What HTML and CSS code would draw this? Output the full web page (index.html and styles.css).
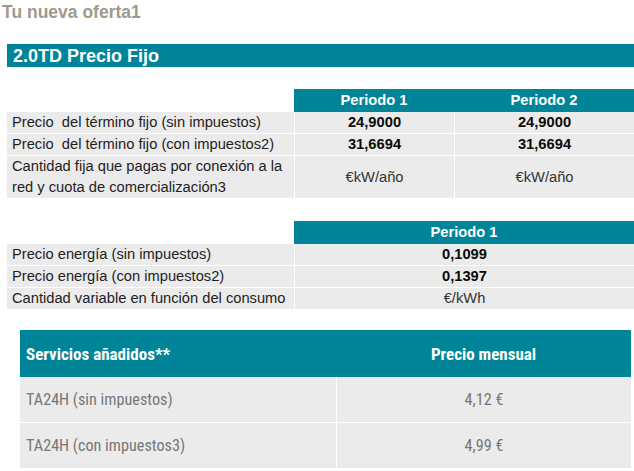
FILE: index.html
```html
<!DOCTYPE html>
<html lang="es">
<head>
<meta charset="utf-8">
<title>Tu nueva oferta</title>
<link rel="stylesheet" href="styles.css">
</head>
<body>
<h1 class="title">Tu nueva oferta1</h1>
<h2 class="banner">2.0TD Precio Fijo</h2>

<table class="grid grid-fixed">
  <colgroup><col class="c-label"><col class="c-p1"><col class="c-p2"></colgroup>
  <thead>
    <tr><th class="blank"></th><th>Periodo 1</th><th>Periodo 2</th></tr>
  </thead>
  <tbody>
    <tr><td>Precio&nbsp; del término fijo (sin impuestos)</td><td class="num">24,9000</td><td class="num">24,9000</td></tr>
    <tr><td>Precio&nbsp; del término fijo (con impuestos2)</td><td class="num">31,6694</td><td class="num">31,6694</td></tr>
    <tr class="tall"><td>Cantidad fija que pagas por conexión a la red y cuota de comercialización3</td><td class="unit">€kW/año</td><td class="unit">€kW/año</td></tr>
  </tbody>
</table>

<table class="grid grid-energy">
  <colgroup><col class="c-label"><col class="c-p1w"></colgroup>
  <thead>
    <tr><th class="blank"></th><th>Periodo 1</th></tr>
  </thead>
  <tbody>
    <tr><td>Precio energía (sin impuestos)</td><td class="num">0,1099</td></tr>
    <tr><td>Precio energía (con impuestos2)</td><td class="num">0,1397</td></tr>
    <tr><td>Cantidad variable en función del consumo</td><td class="unit">€/kWh</td></tr>
  </tbody>
</table>

<table class="services">
  <colgroup><col class="s-label"><col class="s-price"></colgroup>
  <thead>
    <tr><th class="s-name">Servicios añadidos**</th><th>Precio mensual</th></tr>
  </thead>
  <tbody>
    <tr><td class="s-name">TA24H (sin impuestos)</td><td>4,12 €</td></tr>
    <tr><td class="s-name">TA24H (con impuestos3)</td><td>4,99 €</td></tr>
  </tbody>
</table>
</body>
</html>
```
FILE: styles.css
```css
html, body {
  margin: 0;
  padding: 0;
  background: #ffffff;
}

body {
  width: 634px;
  font-family: "Liberation Sans", Arial, sans-serif;
  color: #1e1e1e;
  overflow: hidden;
}

.title {
  margin: 0;
  padding: 2px 0 0 2px;
  font-size: 17.5px;
  line-height: 20px;
  font-weight: bold;
  color: #a0998c;
}

.banner {
  margin: 22px 0 0 7px;
  height: 23px;
  padding: 0 0 0 6px;
  background: #008598;
  color: #ffffff;
  font-size: 18px;
  line-height: 24px;
  font-weight: bold;
}

.grid {
  margin-left: 7px;
  width: 627px;
  border-collapse: separate;
  border-spacing: 0;
  table-layout: fixed;
  font-size: 14.7px;
}

.grid-fixed { margin-top: 22px; }
.grid-energy { margin-top: 23px; }

.c-label { width: 287px; }
.c-p1 { width: 160px; }
.c-p2 { width: 180px; }
.c-p1w { width: 340px; }

.grid th {
  height: 23px;
  padding: 0;
  background: #008598;
  color: #ffffff;
  font-weight: bold;
  text-align: center;
  line-height: 23px;
}

.grid th.blank {
  background: #ffffff;
  border-right: 1px solid #ffffff;
}

.grid td {
  height: 21px;
  padding: 0 5px;
  background: #ebebeb;
  line-height: 21px;
  vertical-align: middle;
}

.grid tbody tr + tr td { border-top: 1px solid #ffffff; }
.grid td + td { border-left: 1px solid #ffffff; }

.grid .tall td {
  height: 42px;
}

.grid td.num {
  text-align: center;
  font-weight: bold;
  color: #0a0a0a;
}

.grid td.unit {
  text-align: center;
  color: #333333;
}

.services {
  margin: 21px 0 0 20px;
  width: 611px;
  border-collapse: separate;
  border-spacing: 0;
  table-layout: fixed;
  font-family: "Roboto Condensed", "Liberation Sans Narrow", "DejaVu Sans Condensed", Roboto, sans-serif;
  font-stretch: condensed;
  font-size: 16.2px;
}

.s-label { width: 316px; }
.s-price { width: 295px; }

.services th {
  height: 47px;
  padding: 0;
  background: #008598;
  color: #ffffff;
  font-weight: bold;
  font-size: 17px;
  text-align: center;
}

.services td {
  height: 45px;
  padding: 0;
  background: #ebebeb;
  color: #777777;
  text-align: center;
}

.services tbody tr + tr td { border-top: 1px solid #ffffff; }
.services td + td { border-left: 1px solid #ffffff; }

.services .s-name {
  text-align: left;
  padding-left: 6px;
}
```
